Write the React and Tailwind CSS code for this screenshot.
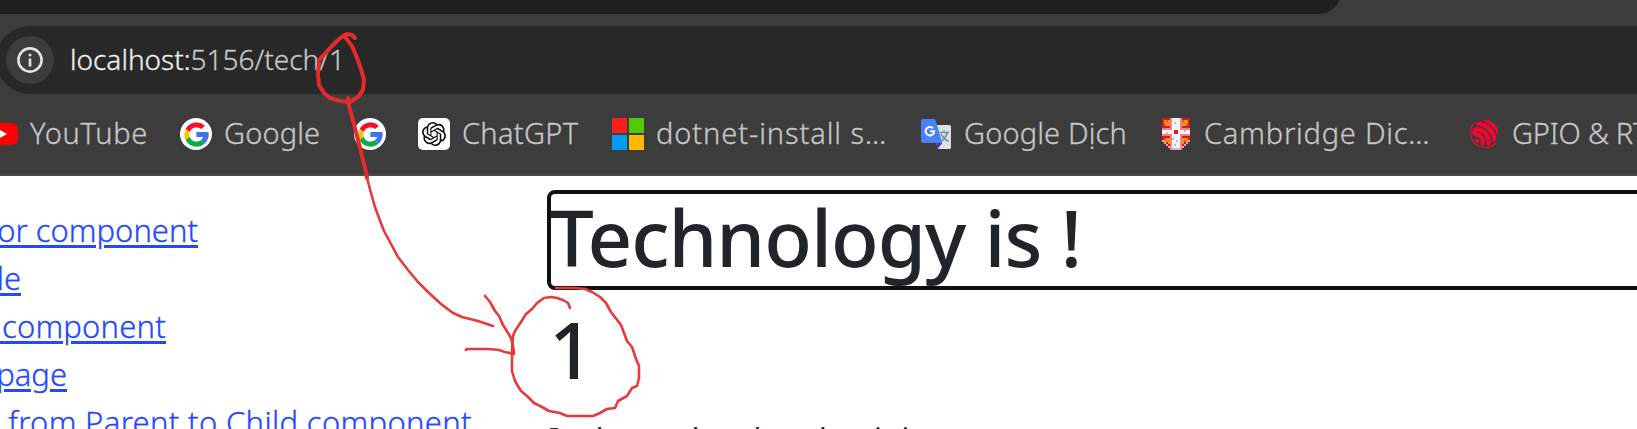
import React from "react";
import { SiOpenai, SiEspressif } from "react-icons/si";

function YouTubeIcon() {
  return (
    <svg width="32" height="32" viewBox="0 0 32 32">
      <path d="M4 5.5Q16 4 28 5.5Q31 6 31.4 9Q32.6 16 31.4 23Q31 26 28 26.6Q16 28 4 26.6Q1 26 .6 23Q-.4 16 .6 9Q1 6 4 5.5z" fill="#ff0000" />
      <path d="M12.8 11.2L21 16L12.8 20.8z" fill="#fff" />
    </svg>
  );
}

function GoogleIcon() {
  return (
    <span className="flex size-8 items-center justify-center rounded-full bg-white">
      <svg width="29" height="29" viewBox="0 0 48 48">
        <path fill="#ffc107" d="M43.611,20.083H42V20H24v8h11.303c-1.649,4.657-6.08,8-11.303,8c-6.627,0-12-5.373-12-12c0-6.627,5.373-12,12-12c3.059,0,5.842,1.154,7.961,3.039l5.657-5.657C34.046,6.053,29.268,4,24,4C12.955,4,4,12.955,4,24c0,11.045,8.955,20,20,20c11.045,0,20-8.955,20-20C44,22.659,43.862,21.35,43.611,20.083z" />
        <path fill="#fb0a32" d="M6.306,14.691l6.571,4.819C14.655,15.108,18.961,12,24,12c3.059,0,5.842,1.154,7.961,3.039l5.657-5.657C34.046,6.053,29.268,4,24,4C16.318,4,9.656,8.337,6.306,14.691z" />
        <path fill="#00b04f" d="M24,44c5.166,0,9.86-1.977,13.409-5.192l-6.19-5.238C29.211,35.091,26.715,36,24,36c-5.202,0-9.619-3.317-11.283-7.946l-6.522,5.025C9.505,39.556,16.227,44,24,44z" />
        <path fill="#3b75f6" d="M43.611,20.083H42V20H24v8h11.303c-0.792,2.237-2.231,4.166-4.087,5.571l6.19,5.238C36.971,39.205,44,34,44,24C44,22.659,43.862,21.35,43.611,20.083z" />
      </svg>
    </span>
  );
}

function ChatGptIcon() {
  return (
    <span className="flex size-8 items-center justify-center rounded-[5px] bg-white">
      <SiOpenai size={24} color="#0d0d0d" />
    </span>
  );
}

function MicrosoftIcon() {
  return (
    <span className="grid size-8 grid-cols-2 gap-0.5">
      <i className="bg-[#fe1f1b]" />
      <i className="bg-[#54c800]" />
      <i className="bg-[#009cf5]" />
      <i className="bg-[#ffb900]" />
    </span>
  );
}

function TranslateIcon() {
  return (
    <svg width="32" height="32" viewBox="0 0 32 32">
      <path d="M16 7H29.5Q31 7 31 8.500V29.500Q31 31 29.500 31H18L16 25z" fill="#e0e0e0" />
      <path d="M16 25H22.300L17.600 31z" fill="#4a35b8" />
      <path d="M3 1H14.200Q15.300 1 15.700 2.200L22.300 25H3Q1 25 1 23V3Q1 1 3 1z" fill="#4a80f5" />
      <path d="M13 10.200A4.300 4.300 0 1 0 14.200 13.300H10.200" fill="none" stroke="#fff" strokeWidth="2" />
      <path d="M19.500 14.500H29M24 12.500V14.500M27.500 14.500Q26 19.500 21.500 23.500M21 16.500Q23.500 20.500 28.500 23.500" fill="none" stroke="#6f9199" strokeWidth="1.500" />
    </svg>
  );
}

function CambridgeIcon() {
  return (
    <svg width="32" height="32" viewBox="0 0 32 32" shapeRendering="crispEdges">
      <path d="M2 0H30V24H28V26H26V28H24V30H20V32H12V30H8V28H6V26H4V24H2z" fill="#de1620" />
      <path d="M4 2H10V8H4zM22 2H28V8H22zM4 20H10V26H8V24H4zM22 20H28V24H24V26H22z" fill="#dc9a1c" />
      <path d="M6 2H8V4H6zM4 6H6V8H4zM22 2H24V4H22zM26 6H28V8H26zM4 20H6V22H4zM24 22H26V24H24z" fill="#e05a1a" />
      <path d="M10 0H12V32H10zM20 0H22V32H20zM2 10H30V12H2zM2 16H30V18H2z" fill="#ff7f86" />
      <path d="M12 0H20V32H12zM2 12H30V16H2z" fill="#eef4f5" />
      <path d="M12 20H14V22H12zM16 22H18V24H16zM14 26H16V28H14zM12 30H20V32H12zM6 14H8V16H6zM24 12H26V14H24zM14 4H16V6H14z" fill="#b9c2c6" />
      <path d="M14 12H18V16H14z" fill="#ee1018" />
      <path d="M2 22H4V24H2zM4 24H6V26H4zM6 26H8V28H6zM8 28H12V30H8zM28 22H30V24H28zM26 24H28V26H26zM24 26H26V28H24zM20 28H24V30H20z" fill="#f29aa0" />
    </svg>
  );
}

function EspressifIcon() {
  return (
    <span className="flex size-8 items-center justify-center">
      <SiEspressif size={28} color="#ff0033" />
    </span>
  );
}

function Bookmark({ icon, label, className }) {
  return (
    <div className={`flex shrink-0 items-center gap-3 whitespace-nowrap ${className}`}>
      {icon}
      {label && <span className="pb-0.5">{label}</span>}
    </div>
  );
}

function SideLink({ className, children }) {
  return (
    <li className={`flex h-12 items-center justify-end whitespace-pre ${className}`}>
      <a className="underline decoration-[3px] underline-offset-[3px]">{children}</a>
    </li>
  );
}

function PenMarks() {
  return (
    <svg className="pointer-events-none absolute inset-0" width="1637" height="429" fill="none" stroke="#e32b2b" strokeLinecap="round" strokeLinejoin="round">
      <path strokeWidth="4" d="M355 38L352 35L347 34L343 36L338 40L331 47L324 55L319 60L318 75L319 85L324 93L330 98L340 101L350 102L358 97L363 90L364 80L361 69L357 58L352 46L345 37" />
      <path strokeWidth="4" d="M348 98L349 106L352 117L356 132L361 152L365 168L367 178" />
      <g strokeWidth="2.6" stroke="#e83a3a">
        <path d="M367 178L371 193L375 207L379 218L384 231L391 244L398 257L408 270L418 282L428 292L441 304L453 313L462 317L478 321L487 324L493 326" />
        <path d="M485 296L490 302L495 311L499 316L503 325L508 333L511 338L513 346L514 353" />
        <path d="M466 350L467 349L489 349L499 350L505 352L514 354" />
        <path d="M570 308L568 303L563 300L557 298L551 297L544 298L537 303L532 309L526 314L521 322L515 331L513 336L512 350L512 371L515 381L521 391L527 396L534 403L542 407L549 411L560 413L567 416L593 416L600 413L607 409L615 408L618 401L627 396L632 388L637 386L639 378L639 366L636 359L632 347L627 341L621 325L611 312L606 303L600 297L592 292L585 289L575 288L556 288" />
      </g>
    </svg>
  );
}

export default function App() {
  return (
    <div className="relative flex h-[429px] w-[1637px] flex-col overflow-hidden bg-white font-['Noto_Sans',sans-serif]">
      <header className="flex h-44 shrink-0 flex-col border-b-2 border-[#4a4a4a] bg-[#3c3c3c]">
        <div className="h-3.5 w-[1341px] shrink-0 overflow-hidden">
          <div className="-mt-10 h-[54px] rounded-br-[22px] bg-[#1f2120]" />
        </div>
        <div className="mt-3 -mr-10 -ml-1 flex h-[68px] shrink-0 items-center gap-4 rounded-full bg-[#282828] pl-2.5">
          <span className="flex size-12 items-center justify-center rounded-full bg-[#3c3c3c]">
            <svg width="26" height="26" viewBox="0 0 26 26">
              <circle cx="13" cy="13" r="11.600" fill="none" stroke="#e3e3e3" strokeWidth="2.600" />
              <path d="M11.700 11.500H14.300V19.500H11.700zM11.700 6.800H14.300V9.300H11.700z" fill="#e3e3e3" />
            </svg>
          </span>
          <span className="pb-0.5 text-[28px] font-light text-[#c7c7c7] [-webkit-text-stroke:0.3px]">
            <span className="text-[#f0f0f0]">localhost:</span>5156/tech/1
          </span>
        </div>
        <nav className="-ml-3.5 flex h-20 shrink-0 items-center text-[29px] font-light text-[#c7c7c7] [-webkit-text-stroke:0.3px]">
          <Bookmark className="w-[194px] tracking-[0.7px]" icon={<YouTubeIcon />} label="YouTube" />
          <Bookmark className="w-[174px] tracking-[0.15px]" icon={<GoogleIcon />} label="Google" />
          <Bookmark className="w-16" icon={<GoogleIcon />} />
          <Bookmark className="w-[194px] tracking-[0.3px]" icon={<ChatGptIcon />} label="ChatGPT" />
          <Bookmark className="w-[308px] tracking-[0.9px]" icon={<MicrosoftIcon />} label="dotnet-install s…" />
          <Bookmark className="w-60 tracking-[0.15px]" icon={<TranslateIcon />} label="Google Dịch" />
          <Bookmark className="w-[308px] tracking-[0.75px]" icon={<CambridgeIcon />} label="Cambridge Dic…" />
          <Bookmark className="w-[308px] tracking-[-0.2px]" icon={<EspressifIcon />} label="GPIO & RTC" />
        </nav>
      </header>
      <div className="flex h-[253px] overflow-hidden">
        <ul className="w-[547px] shrink-0 pt-[30px] text-[31px] font-light text-[#2447ff] [-webkit-text-stroke:0.3px]">
          <SideLink className="w-[198px]">or component</SideLink>
          <SideLink className="w-[21px]">le</SideLink>
          <SideLink className="w-[166px] tracking-[0.2px]"> component</SideLink>
          <SideLink className="w-[67px]">page</SideLink>
          <SideLink className="w-[472px] tracking-[0.33px]"> from Parent to Child component</SideLink>
        </ul>
        <main className="w-[1200px] shrink-0 pt-3.5 text-[#212529]">
          <h1 className="h-[100px] rounded-lg border-4 border-[#101010] text-[78px] leading-[86px] font-medium tracking-[-1px]">
            <span className="-ml-px">Technology is !</span>
          </h1>
          <h1 className="mt-[9px] h-[100px] pl-0.5 text-[78px] leading-[100px] font-medium">1</h1>
          <p className="mt-4 pl-0.5 text-[30px] leading-[48px] tracking-[0.3px] whitespace-nowrap">It also and make what it is</p>
        </main>
      </div>
      <PenMarks />
    </div>
  );
}
